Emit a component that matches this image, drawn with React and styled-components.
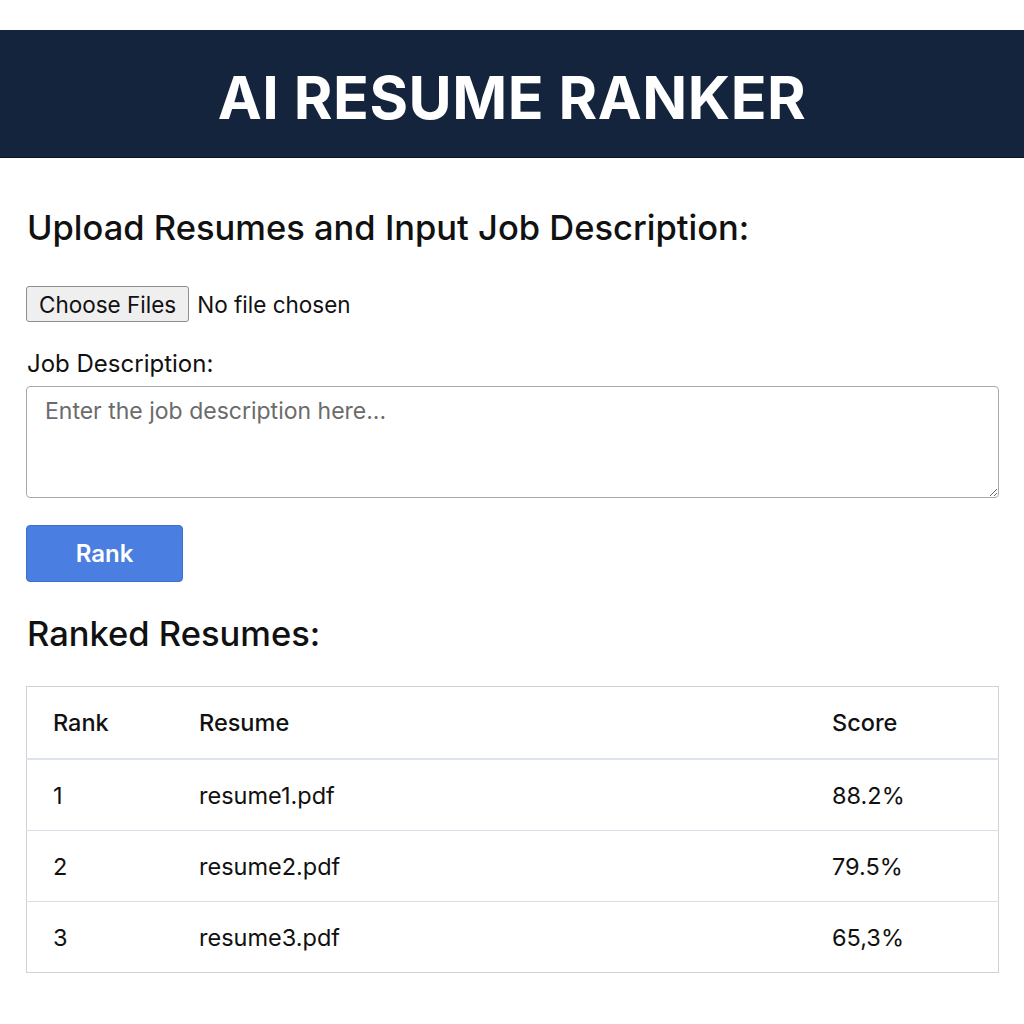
import React from 'react';
import styled, { createGlobalStyle } from 'styled-components';

const GlobalStyle = createGlobalStyle`
  body {
    margin: 0;
    background: #ffffff;
    font-family: Inter, "Noto Sans", sans-serif;
    color: #111111;
  }
`;

const Page = styled.div`
  padding-top: 30px;
`;

const Header = styled.header`
  height: 128px;
  box-sizing: border-box;
  padding-top: 8px;
  background: #15243d;
  border-bottom: 1px solid #0b1426;

  display: flex;
  align-items: center;
  justify-content: center;
`;

const Title = styled.h1`
  margin: 0;
  color: #ffffff;
  font-size: 59px;
  font-weight: 700;
  letter-spacing: 0.5px;
`;

const Main = styled.main`
  padding: 0 25px 0 26px;
  display: flex;
  flex-direction: column;
`;

const SectionTitle = styled.h2`
  margin: ${props => props.top}px 0 0 1px;
  font-size: 34.5px;
  font-weight: 500;
  line-height: 40px;
`;

const FileRow = styled.div`
  margin-top: 38px;
  display: flex;
  align-items: center;
  gap: 8px;
`;

const FileButton = styled.button`
  height: 36px;
  padding: 0 12px;
  background: #efefef;
  border: 1px solid #8f8f8f;
  border-radius: 3px;
  font-family: inherit;
  font-size: 22.5px;
  color: #111111;
`;

const FileStatus = styled.span`
  font-size: 22.5px;
`;

const Label = styled.label`
  margin: 28px 0 0 1px;
  font-size: 24px;
  line-height: 28px;
`;

const TextArea = styled.textarea`
  margin-top: 8px;
  height: 112px;
  box-sizing: border-box;
  padding: 10px 18px;
  border: 1.5px solid #a9a9a9;
  border-radius: 4px;
  font-family: inherit;
  font-size: 23px;
  color: #111111;

  &::placeholder {
    color: #6b6b6b;
  }
`;

const RankButton = styled.button`
  margin-top: 27px;
  align-self: flex-start;
  width: 157px;
  height: 57px;
  background: #4a7ee0;
  border: 1px solid #3b6fd4;
  border-radius: 4px;
  color: #ffffff;
  font-family: inherit;
  font-size: 24px;
  font-weight: 600;
`;

const Table = styled.table`
  margin-top: 32px;
  width: 100%;
  border-collapse: collapse;
  border: 1px solid #cfd3d8;
  font-size: 23.5px;
`;

const HeadCell = styled.th`
  height: 71px;
  padding: 0 0 0 ${props => props.pad}px;
  text-align: left;
  font-weight: 500;
  width: ${props => props.w || 'auto'};
  border-bottom: 2px solid #dde3ec;
`;

const Row = styled.tr`
  border-top: 1px solid #d8dfea;
`;

const Cell = styled.td`
  height: 70px;
  padding: 0 0 0 ${props => props.pad}px;
`;

const results = [
  { rank: 1, file: 'resume1.pdf', score: '88.2%' },
  { rank: 2, file: 'resume2.pdf', score: '79.5%' },
  { rank: 3, file: 'resume3.pdf', score: '65,3%' },
];

export default function App() {
  return (
    <Page>
      <GlobalStyle />
      <Header>
        <Title>AI RESUME RANKER</Title>
      </Header>
      <Main>
        <SectionTitle top={50}>Upload Resumes and Input Job Description:</SectionTitle>
        <FileRow>
          <FileButton>Choose Files</FileButton>
          <FileStatus>No file chosen</FileStatus>
        </FileRow>
        <Label htmlFor="job">Job Description:</Label>
        <TextArea id="job" placeholder="Enter the job description here..." />
        <RankButton>Rank</RankButton>
        <SectionTitle top={32}>Ranked Resumes:</SectionTitle>
        <Table>
          <thead>
            <tr>
              <HeadCell pad={26} w="146px">Rank</HeadCell>
              <HeadCell pad={0}>Resume</HeadCell>
              <HeadCell pad={0} w="166px">Score</HeadCell>
            </tr>
          </thead>
          <tbody>
            {results.map(r => (
              <Row key={r.rank}>
                <Cell pad={26}>{r.rank}</Cell>
                <Cell pad={0}>{r.file}</Cell>
                <Cell pad={0}>{r.score}</Cell>
              </Row>
            ))}
          </tbody>
        </Table>
      </Main>
    </Page>
  );
}
